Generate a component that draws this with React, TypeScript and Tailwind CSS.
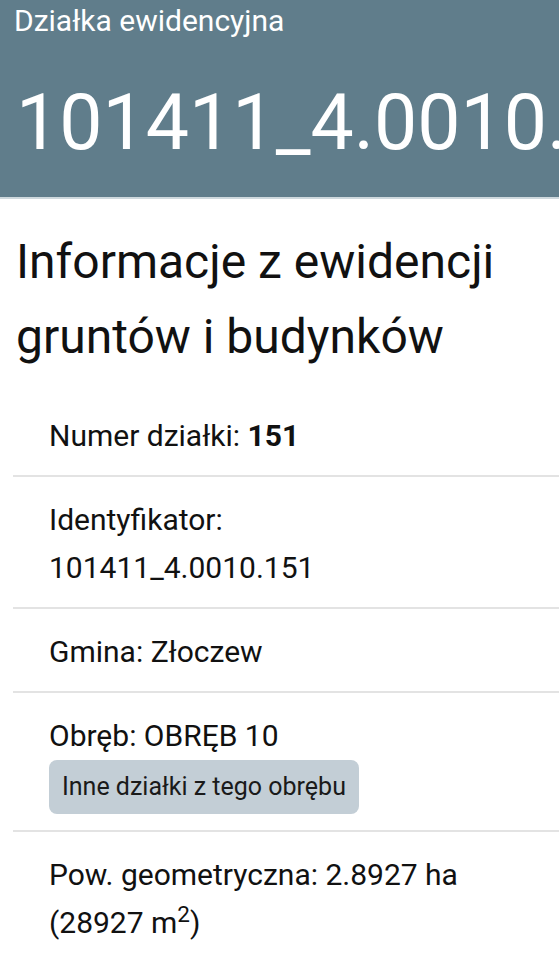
const rows = [
  { key: 'numer' },
  { key: 'id' },
  { key: 'gmina' },
  { key: 'obreb' },
  { key: 'pow' }
];

export default function App() {
  return (
    <div className="min-h-screen w-full overflow-hidden bg-white text-[#111]" style={{ fontFamily: 'Roboto, "Noto Sans", sans-serif' }}>
      <header className="h-[199px] overflow-hidden border-b-2 border-[#cfd9de] bg-[#607d8b] pl-[14px] text-white">
        <p className="pt-[2px] text-[30px] leading-[38px]">Działka ewidencyjna</p>
        <h1 className="mt-[35px] whitespace-nowrap pl-[2px] text-[77px] leading-[96px]">101411_4.0010.151</h1>
      </header>

      <main className="pl-[13px]">
        <h2 className="pb-[19px] pl-[3px] pt-[25px] text-[48px] leading-[75px]">
          Informacje z ewidencji gruntów i budynków
        </h2>

        <ul className="text-[30px] leading-[48px]">
          {rows.map((row) => (
            <li key={row.key} className="border-b-2 border-[#e3e3e3] pb-[15px] pl-[36px] pt-[19px] last:border-b-0">
              {row.key === 'numer' ? (
                <span>
                  Numer działki: <b className="font-bold">151</b>
                </span>
              ) : null}
              {row.key === 'id' ? (
                <>
                  <div>Identyfikator:</div>
                  <div>101411_4.0010.151</div>
                </>
              ) : null}
              {row.key === 'gmina' ? <span>Gmina: Złoczew</span> : null}
              {row.key === 'obreb' ? (
                <>
                  <div>Obręb: OBRĘB 10</div>
                  <button className="mb-[1px] block rounded-[8px] bg-[#c3ced6] px-[13px] text-[25px] leading-[54px] text-[#1a1a1a]" type="button">
                    Inne działki z tego obrębu
                  </button>
                </>
              ) : null}
              {row.key === 'pow' ? (
                <>
                  <div>Pow. geometryczna: 2.8927 ha</div>
                  <div>
                    (28927 m<sup>2</sup>)
                  </div>
                </>
              ) : null}
            </li>
          ))}
        </ul>
      </main>
    </div>
  );
}
